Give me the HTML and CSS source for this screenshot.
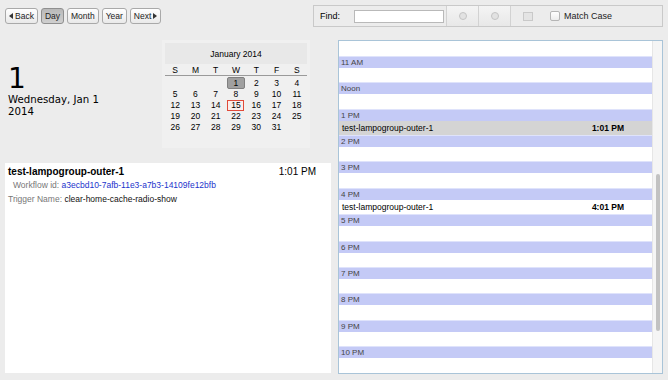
FILE: index.html
```html
<!DOCTYPE html>
<html lang="en">
<head>
    <meta charset="UTF-8">
    <title>Calendar - Day</title>
    <link rel="stylesheet" href="styles.css">
</head>
<body>
    <div class="toolbar">
        <div class="nav">
            <button class="btn"><span class="tri left-tri"></span>Back</button>
            <button class="btn active">Day</button>
            <button class="btn">Month</button>
            <button class="btn">Year</button>
            <button class="btn">Next<span class="tri right-tri"></span></button>
        </div>
        <div class="find">
            <label class="find-label">Find:</label>
            <input type="text" class="find-input">
            <div class="seg">
                <span class="seg-btn"><span class="ring"></span></span>
                <span class="seg-btn"><span class="ring up"></span></span>
            </div>
            <span class="mini-box"></span>
            <span class="check"></span>
            <span class="match">Match Case</span>
        </div>
    </div>

    <div class="main">
        <div class="left">
            <div class="top">
                <div class="today">
                    <div class="big-day">1</div>
                    <div class="weekday">Wednesday, Jan 1</div>
                    <div class="year">2014</div>
                </div>
                <div class="mini-cal">
                    <div class="cal-title">January 2014</div>
                    <table class="cal">
                        <tr class="dow"><th>S</th><th>M</th><th>T</th><th>W</th><th>T</th><th>F</th><th>S</th></tr>
                        <tr><td></td><td></td><td></td><td><span class="sel">1</span></td><td>2</td><td>3</td><td>4</td></tr>
                        <tr><td>5</td><td>6</td><td>7</td><td>8</td><td>9</td><td>10</td><td>11</td></tr>
                        <tr><td>12</td><td>13</td><td>14</td><td><span class="today-mark">15</span></td><td>16</td><td>17</td><td>18</td></tr>
                        <tr><td>19</td><td>20</td><td>21</td><td>22</td><td>23</td><td>24</td><td>25</td></tr>
                        <tr><td>26</td><td>27</td><td>28</td><td>29</td><td>30</td><td>31</td><td></td></tr>
                    </table>
                </div>
            </div>
            <div class="detail">
                <div class="detail-head">
                    <span class="detail-title">test-lampogroup-outer-1</span>
                    <span class="detail-time">1:01 PM</span>
                </div>
                <div class="detail-row indent"><span class="key">Workflow id:</span> <a class="link">a3ecbd10-7afb-11e3-a7b3-14109fe12bfb</a></div>
                <div class="detail-row"><span class="key">Trigger Name:</span> clear-home-cache-radio-show</div>
            </div>
        </div>

        <div class="schedule">
            <div class="hours">
                <div class="lead"></div>
                <div class="slot"><div class="band">11 AM</div></div>
                <div class="slot"><div class="band">Noon</div></div>
                <div class="slot"><div class="band">1 PM</div>
                    <div class="event selected"><span>test-lampogroup-outer-1</span><b>1:01 PM</b></div>
                </div>
                <div class="slot"><div class="band">2 PM</div></div>
                <div class="slot"><div class="band">3 PM</div></div>
                <div class="slot"><div class="band">4 PM</div>
                    <div class="event"><span>test-lampogroup-outer-1</span><b>4:01 PM</b></div>
                </div>
                <div class="slot"><div class="band">5 PM</div></div>
                <div class="slot"><div class="band">6 PM</div></div>
                <div class="slot"><div class="band">7 PM</div></div>
                <div class="slot"><div class="band">8 PM</div></div>
                <div class="slot"><div class="band">9 PM</div></div>
                <div class="slot"><div class="band">10 PM</div></div>
            </div>
            <div class="scrollbar">
                <div class="thumb"></div>
            </div>
        </div>
    </div>
</body>
</html>
```

FILE: styles.css
```css
body {
    margin: 0;
    background-color: #ececec;
    font-family: "DejaVu Sans", "Liberation Sans", sans-serif;
    color: #000;
    width: 668px;
    height: 380px;
    overflow: hidden;
}

.toolbar {
    display: flex;
    justify-content: space-between;
    align-items: flex-start;
    padding: 5px 5px 0 5px;
    height: 35px;
    box-sizing: border-box;
}

.nav {
    display: flex;
    gap: 3px;
    padding-top: 3px;
}

.btn {
    display: flex;
    align-items: center;
    gap: 2px;
    height: 16px;
    padding: 0 3px;
    font-family: "Liberation Sans", sans-serif;
    font-size: 8.5px;
    color: #222;
    border: 1px solid #a9a9a9;
    border-radius: 3px;
    background: linear-gradient(#ffffff, #e9e9e9);
    line-height: 14px;
}

.btn.active {
    background: linear-gradient(#b9b9b9, #cfcfcf);
    border-color: #8f8f8f;
}

.tri {
    width: 0;
    height: 0;
    border-top: 3px solid transparent;
    border-bottom: 3px solid transparent;
}

.left-tri {
    border-right: 4px solid #333;
}

.right-tri {
    border-left: 4px solid #333;
}

.find {
    display: flex;
    align-items: center;
    width: 350px;
    height: 22px;
    box-sizing: border-box;
    border: 1px solid #c9c9c9;
    background-color: #ececec;
    font-family: "Liberation Sans", sans-serif;
    font-size: 9px;
    padding-left: 6px;
}

.find-label {
    width: 34px;
}

.find-input {
    width: 90px;
    height: 13px;
    padding: 0;
    border: 1px solid #b9b9b9;
    background: #fff;
    box-sizing: border-box;
    margin-right: 2px;
}

.seg {
    display: flex;
    height: 20px;
}

.seg-btn {
    width: 31px;
    display: flex;
    align-items: center;
    justify-content: center;
    border-left: 1px solid #d2d2d2;
    border-right: 1px solid #d2d2d2;
    background: linear-gradient(#f4f4f4, #e8e8e8);
}

.seg-btn + .seg-btn {
    border-left: none;
}

.ring {
    width: 6px;
    height: 6px;
    border: 1px solid #c4c4c4;
    border-radius: 50%;
    background: #e2e2e2;
}

.mini-box {
    width: 8px;
    height: 7px;
    border: 1px solid #c9c9c9;
    background: #e4e4e4;
    margin-left: 12px;
}

.check {
    width: 8px;
    height: 8px;
    border: 1px solid #b5b5b5;
    border-radius: 2px;
    background: linear-gradient(#ffffff, #ececec);
    margin-left: 17px;
    margin-right: 4px;
}

.match {
    color: #222;
}

.main {
    display: flex;
    padding-left: 5px;
    padding-top: 5px;
}

.left {
    width: 326px;
}

.top {
    display: flex;
    height: 123px;
}

.today {
    width: 154px;
    padding-top: 24px;
    padding-left: 3px;
}

.big-day {
    font-family: "DejaVu Sans", sans-serif;
    font-size: 28px;
    line-height: 30px;
}

.weekday, .year {
    font-size: 10.2px;
    line-height: 12px;
}

.mini-cal {
    width: 148px;
    height: 108px;
    background-color: #f0f0f0;
    font-family: "Liberation Sans", sans-serif;
    font-size: 8.5px;
}

.cal-title {
    text-align: center;
    height: 21px;
    line-height: 22px;
    margin: 3px 3px 0 3px;
    background-color: #e8e8e8;
}

.cal {
    width: 142px;
    margin: 0 3px;
    border-collapse: collapse;
    table-layout: fixed;
}

.cal th {
    font-weight: normal;
    height: 11px;
    border-bottom: 1px solid #9a9a9a;
    padding: 0;
}

.cal td {
    text-align: center;
    padding: 0;
    height: 11px;
    line-height: 11px;
}

.cal tr:nth-child(2) td {
    padding-top: 1px;
}

.sel {
    display: inline-block;
    width: 16px;
    height: 10px;
    line-height: 10px;
    background-color: #a0a0a0;
    border: 1px solid #808080;
    border-radius: 2px;
}

.today-mark {
    display: inline-block;
    width: 15px;
    height: 9px;
    line-height: 9px;
    border: 1px solid #e04a3a;
    background-color: #fbeeec;
}

.detail {
    background-color: #fff;
    height: 210px;
    font-family: "Liberation Sans", sans-serif;
    font-size: 8.5px;
    padding: 3px 3px 0 3px;
    box-sizing: border-box;
}

.detail-head {
    display: flex;
    justify-content: space-between;
    padding-right: 12px;
    font-size: 10px;
    line-height: 12px;
}

.detail-title {
    font-weight: bold;
}

.detail-row {
    line-height: 14px;
    color: #111;
}

.detail-row.indent {
    padding-left: 5px;
}

.key {
    color: #777;
}

.link {
    color: #2233cc;
}

.schedule {
    display: flex;
    margin-left: 7px;
    width: 325px;
    height: 334px;
    border: 1px solid #a9c4d8;
    background-color: #fff;
    box-sizing: border-box;
    overflow: hidden;
}

.hours {
    flex: 1;
    font-family: "Liberation Sans", sans-serif;
    font-size: 8px;
}

.lead {
    height: 15px;
}

.slot {
    height: 26.36px;
}

.band {
    height: 11px;
    line-height: 11px;
    background-color: #c4caf6;
    border-top: 1px solid #dfe3fb;
    color: #444;
    padding-left: 2px;
}

.event {
    display: flex;
    justify-content: space-between;
    height: 15px;
    line-height: 15px;
    padding: 0 28px 0 3px;
    font-size: 8.5px;
}

.event.selected {
    background-color: #d4d4d4;
}

.scrollbar {
    width: 9px;
    background-color: #f5f5f5;
    border-left: 1px solid #e6e6e6;
    padding-top: 133px;
}

.thumb {
    width: 4px;
    height: 157px;
    margin-left: 3px;
    border-radius: 3px;
    background-color: #c2c2c2;
}
```
